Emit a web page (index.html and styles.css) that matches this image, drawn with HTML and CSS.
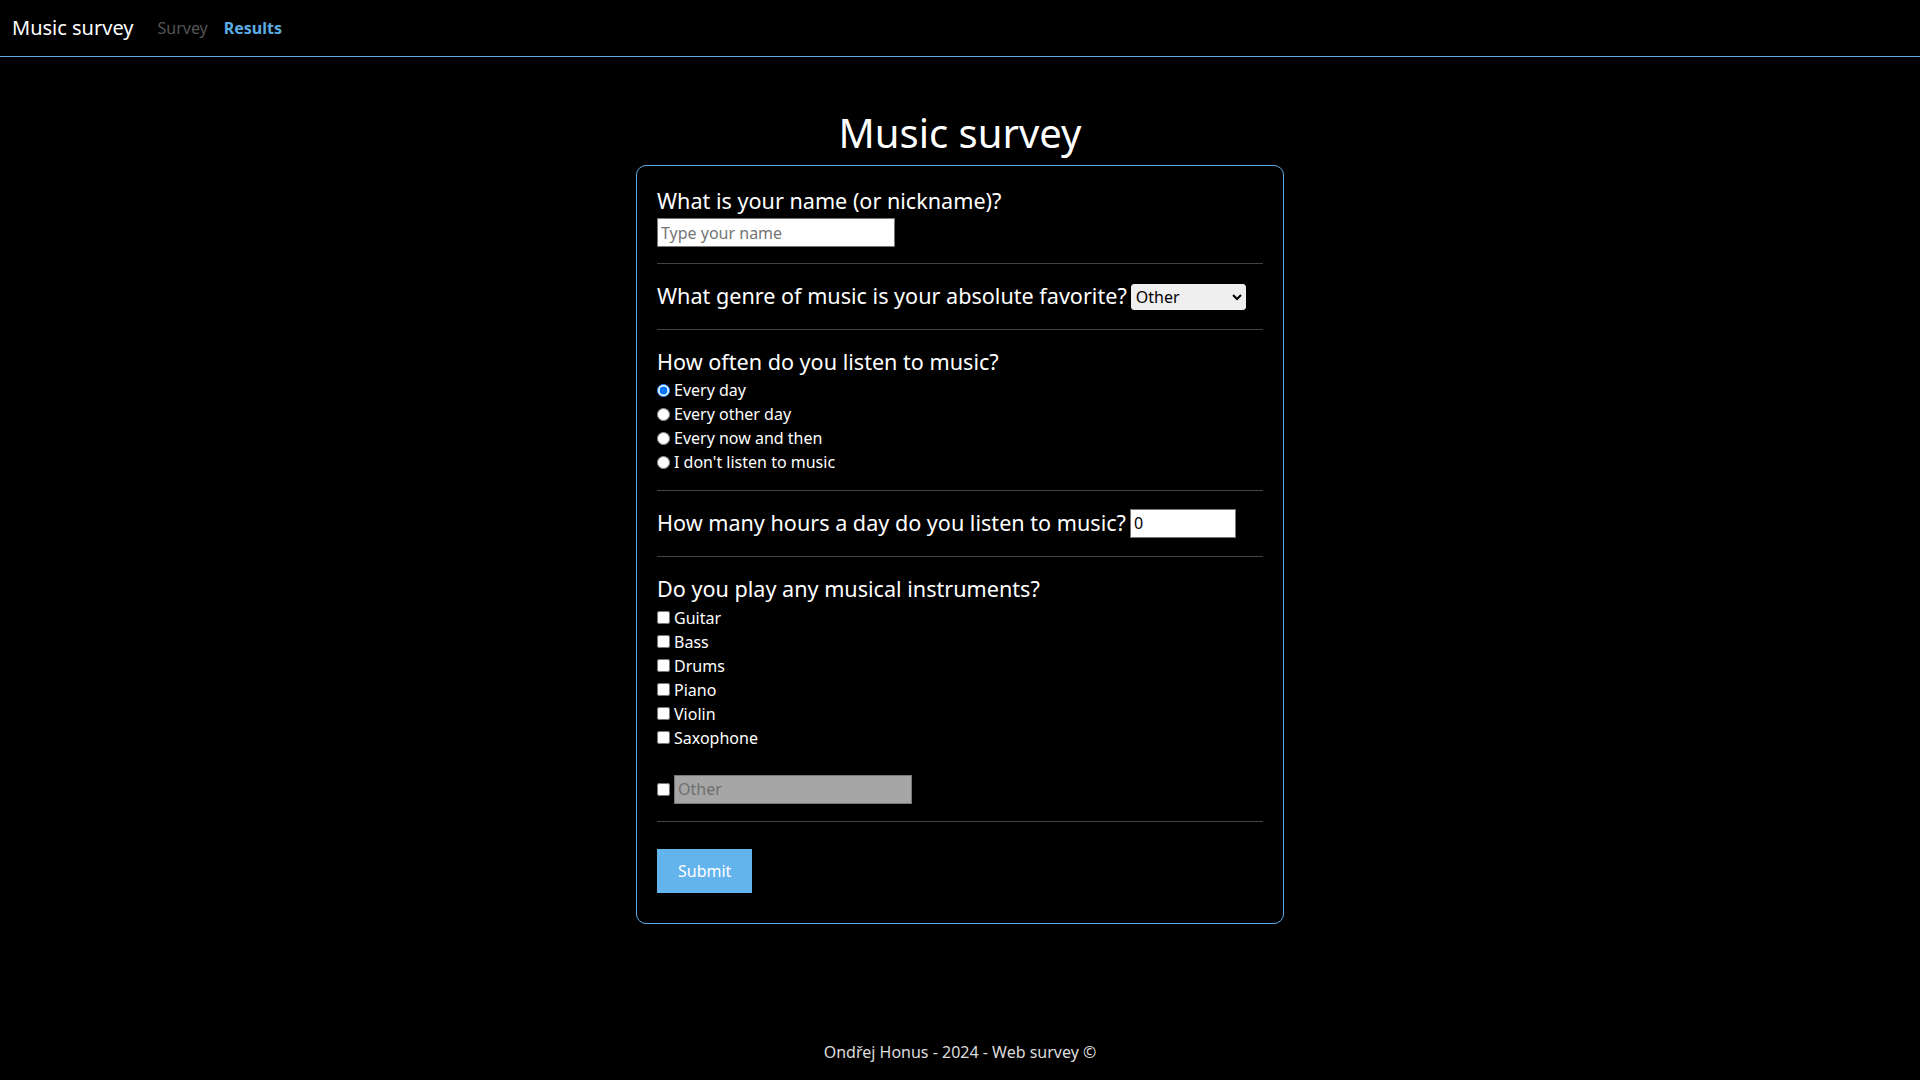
FILE: index.html
```html
<!DOCTYPE html>
<html lang="en">
<head>
<meta charset="utf-8">
<title>Music survey</title>
<link rel="stylesheet" href="styles.css">
</head>
<body>
<nav class="navbar">
  <a class="brand" href="#">Music survey</a>
  <a class="nav-link" href="#">Survey</a>
  <a class="nav-link active" href="#">Results</a>
</nav>
<main class="main">
  <h1 class="title">Music survey</h1>
  <form class="card">
    <div class="section">
      <label class="question" for="name">What is your name (or nickname)?</label>
      <input class="text-input" id="name" type="text" placeholder="Type your name">
    </div>
    <div class="section">
      <div class="inline-row">
        <label class="question" for="genre">What genre of music is your absolute favorite?</label>
        <select class="select" id="genre">
          <option>Other</option>
        </select>
      </div>
    </div>
    <div class="section">
      <div class="question">How often do you listen to music?</div>
      <label class="option"><input type="radio" name="often" checked>Every day</label>
      <label class="option"><input type="radio" name="often">Every other day</label>
      <label class="option"><input type="radio" name="often">Every now and then</label>
      <label class="option"><input type="radio" name="often">I don't listen to music</label>
    </div>
    <div class="section">
      <div class="inline-row">
        <label class="question" for="hours">How many hours a day do you listen to music?</label>
        <input class="number-input" id="hours" type="text" value="0">
      </div>
    </div>
    <div class="section instruments">
      <div class="question">Do you play any musical instruments?</div>
      <label class="option"><input type="checkbox">Guitar</label>
      <label class="option"><input type="checkbox">Bass</label>
      <label class="option"><input type="checkbox">Drums</label>
      <label class="option"><input type="checkbox">Piano</label>
      <label class="option"><input type="checkbox">Violin</label>
      <label class="option"><input type="checkbox">Saxophone</label>
      <div class="other-row">
        <input type="checkbox">
        <input class="text-input other-input" type="text" placeholder="Other" disabled>
      </div>
    </div>
    <div class="section last">
      <button class="submit" type="button">Submit</button>
    </div>
  </form>
</main>
<footer class="footer">Ondřej Honus - 2024 - Web survey ©</footer>
</body>
</html>
```

FILE: styles.css
```css
* {
  box-sizing: border-box;
}

html, body {
  margin: 0;
  padding: 0;
}

body {
  background: #000;
  color: #fff;
  font-family: "Noto Sans", "Open Sans", sans-serif;
  font-size: 16px;
  line-height: 1.5;
  min-height: 100vh;
  display: flex;
  flex-direction: column;
}

.navbar {
  height: 57px;
  border-bottom: 1px solid #5dade2;
  display: flex;
  align-items: center;
  padding: 0 12px;
}

.brand {
  color: #fff;
  font-size: 20px;
  text-decoration: none;
  margin-right: 24px;
}

.nav-link {
  color: #555;
  text-decoration: none;
  font-size: 16px;
  margin-right: 16px;
}

.nav-link.active {
  color: #5dade2;
  font-weight: 700;
}

.main {
  flex: 1;
  display: flex;
  flex-direction: column;
  align-items: center;
}

.title {
  font-size: 40px;
  font-weight: 400;
  line-height: normal;
  margin: 48px 0 5px;
}

.card {
  width: 648px;
  border: 1px solid #5dade2;
  border-radius: 10px;
  padding: 3px 20px 20px;
}

.section {
  border-bottom: 1px solid #444;
  padding: 16px 0;
  display: flex;
  flex-direction: column;
  align-items: flex-start;
}

.section.instruments {
  padding-bottom: 17px;
}

.section.instruments .question {
  margin-bottom: 1px;
}

.section.last {
  border-bottom: none;
  padding-bottom: 0;
}

.question {
  font-size: 21.6px;
  line-height: 1.5;
  white-space: nowrap;
}

.inline-row {
  display: flex;
  align-items: center;
  gap: 4px;
  white-space: nowrap;
}

.text-input {
  width: 238px;
  height: 29px;
  font-family: "Noto Sans", sans-serif;
  font-size: 16px;
  padding: 1px 3px;
  border: 1px solid #767676;
  background: #fff;
  color: #000;
  margin-top: 1px;
}

.text-input::placeholder {
  color: #757575;
}

.select {
  flex: none;
  width: 115px;
  height: 26px;
  font-family: "Noto Sans", sans-serif;
  font-size: 16px;
  color: #000;
  background-color: #efefef;
  border: 1px solid #efefef;
  border-radius: 3px;
}

.number-input {
  flex: none;
  width: 106px;
  height: 29px;
  font-family: "Noto Sans", sans-serif;
  font-size: 16px;
  padding: 1px 3px;
  border: 1px solid #767676;
  background: #fff;
  color: #000;
}

.option {
  display: flex;
  align-items: center;
  font-size: 16px;
  line-height: 24px;
}

.option input {
  margin: 0 4px 0 0;
  width: 13px;
  height: 13px;
}

.other-row {
  display: flex;
  align-items: center;
  margin-top: 25px;
}

.other-row input[type="checkbox"] {
  margin: 0 4px 0 0;
  width: 13px;
  height: 13px;
}

.other-input {
  margin-top: 0;
  background: #a6a6a6;
  border-color: #777;
}

.other-input::placeholder {
  color: #6f6f6f;
}

.submit {
  margin: 11px 0 10px;
  height: 44px;
  padding: 0 21px;
  background: #63b3ed;
  color: #fff;
  border: none;
  font-family: "Noto Sans", sans-serif;
  font-size: 16px;
}

.footer {
  text-align: center;
  color: #ddd;
  font-size: 16px;
  line-height: 24px;
  padding: 16px 0;
}
```
